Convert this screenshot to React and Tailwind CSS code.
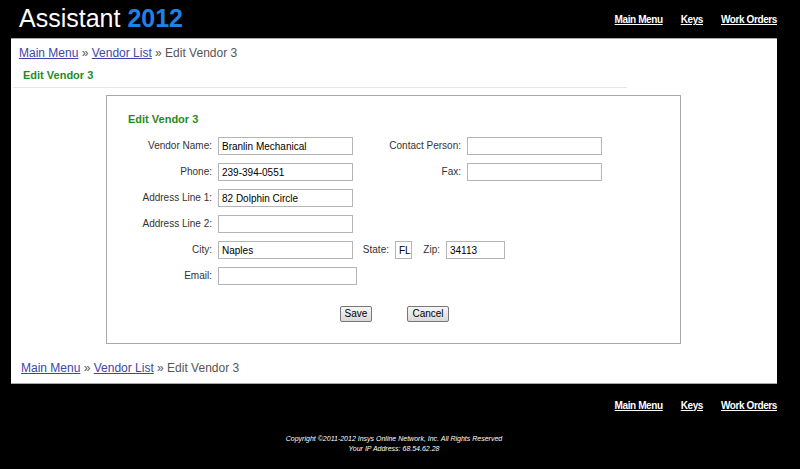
const font = { fontFamily: '"Liberation Sans", Arial, sans-serif' };

function Crumbs({ className }) {
  return (
    <div className={`text-[12px] text-[#555] ${className}`}>
      <a href="#" className="text-[#3b46a8] underline">Main Menu</a>
      <span> » </span>
      <a href="#" className="text-[#3b46a8] underline">Vendor List</a>
      <span> » Edit Vendor 3</span>
    </div>
  );
}

function NavLinks({ className }) {
  return (
    <div className={`flex gap-[18px] text-[10px] font-bold tracking-[-0.4px] text-white ${className}`}>
      <a href="#" className="underline">Main Menu</a>
      <a href="#" className="underline">Keys</a>
      <a href="#" className="underline">Work Orders</a>
    </div>
  );
}

function Field({ label, value = '', w = 'w-[135px]', lw = 'w-[111px]' }) {
  return (
    <div className="flex items-start">
      <div className={`${lw} shrink-0 pr-[6px] text-right text-[10px] text-[#333] pt-[1px]`}>{label}</div>
      <div className={`${w} h-[18px] border border-[#b5b5b5] bg-white px-[3px] text-[10px] leading-[17px] text-black`}>{value}</div>
    </div>
  );
}

function Btn({ children, w }) {
  return (
    <div className={`${w} h-[16px] rounded-[2px] border border-[#777] bg-gradient-to-b from-[#f6f6f6] to-[#d9d9d9] text-center text-[10px] leading-[14px] text-black`}>
      {children}
    </div>
  );
}

export default function App() {
  return (
    <div className="min-h-[469px] w-[800px] bg-black" style={font}>
      <div className="flex h-[38px] items-start justify-between pl-[19px] pr-[23px]">
        <div className="mt-[3px] text-[25px] leading-[30px] text-white">
          Assistant <span className="font-bold text-[#1e82e3]">2012</span>
        </div>
        <NavLinks className="mt-[12px]" />
      </div>

      <div className="ml-[11px] w-[766px] border-y border-[#aaa] bg-white pb-[7px]">
        <Crumbs className="mt-[6px] pl-[8px] leading-[16px]" />
        <div className="mt-[6px] ml-[2px] w-[614px] border-b border-[#e6e6e6] pb-[3px] pl-[10px] text-[11px] font-bold text-[#1f8c1f]">
          Edit Vendor 3
        </div>

        <div className="mt-[7px] ml-[95px] h-[249px] w-[575px] border border-[#aaa] pt-[15px]">
          <div className="pl-[21px] text-[11px] font-bold text-[#1f8c1f]">Edit Vendor 3</div>
          <div className="mt-[10px] flex flex-col gap-[8px]">
            <div className="flex">
              <Field label="Vendor Name:" value="Branlin Mechanical" />
              <Field label="Contact Person:" lw="w-[114px]" />
            </div>
            <div className="flex">
              <Field label="Phone:" value="239-394-0551" />
              <Field label="Fax:" lw="w-[114px]" />
            </div>
            <Field label="Address Line 1:" value="82 Dolphin Circle" />
            <Field label="Address Line 2:" />
            <div className="flex items-start">
              <Field label="City:" value="Naples" />
              <Field label="State:" value="FL" w="w-[17px]" lw="w-[42px] pr-[2px]" />
              <Field label="Zip:" value="34113" w="w-[59px]" lw="w-[34px] pr-[3px]" />
            </div>
            <Field label="Email:" w="w-[139px]" />
          </div>
          <div className="mt-[21px] flex pl-[233px]">
            <Btn w="w-[32px]">Save</Btn>
            <div className="w-[35px]" />
            <Btn w="w-[42px]">Cancel</Btn>
          </div>
        </div>

        <Crumbs className="mt-[16px] pl-[10px] leading-[16px]" />
      </div>

      <div className="flex justify-end pr-[23px] pt-[14px]">
        <NavLinks />
      </div>
      <div className="mt-[21px] flex flex-col items-center pr-[12px] text-[7px] italic leading-[10px] text-white">
        <div>Copyright ©2011-2012 Insys Online Network, Inc. All Rights Reserved</div>
        <div>Your IP Address: 68.54.62.28</div>
      </div>
    </div>
  );
}
